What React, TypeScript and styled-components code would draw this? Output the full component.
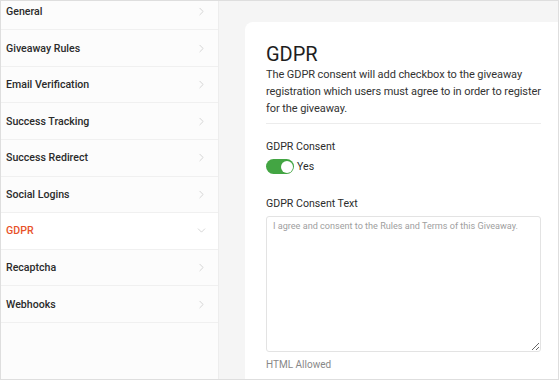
import styled, { createGlobalStyle } from "styled-components";
import { ChevronRight, ChevronDown } from "lucide-react";

const GlobalStyle = createGlobalStyle`
  * { box-sizing: border-box; }
  body {
    margin: 0;
    font-family: Roboto, "Noto Sans", sans-serif;
    color: #2c2c2c;
  }
`;

const Frame = styled.div`
  width: 559px;
  height: 380px;
  border: 1px solid #dedede;
  display: grid;
  grid-template-columns: 218px 1fr;
  overflow: hidden;
  background: #f5f5f5;
`;

const Sidebar = styled.nav`
  background: #fcfcfc;
  border-right: 1px solid #ededed;
  overflow: hidden;
`;

const MenuList = styled.ul`
  list-style: none;
  margin: -7.4px 0 0;
  padding: 0;
`;

const MenuItem = styled.li<{ $active?: boolean }>`
  height: 36.6px;
  display: flex;
  align-items: center;
  justify-content: space-between;
  padding: 0 10px 0 5px;
  border-bottom: 1px solid #f0f0f0;
  background: ${(p) => (p.$active ? "#ffffff" : "transparent")};
  color: ${(p) => (p.$active ? "#e8522a" : "#2b2b2b")};
  font-size: 10.6px;
  font-weight: 500;
  svg {
    color: #c4c4c4;
  }
`;

const Main = styled.main`
  padding: 21px 0 0 26px;
  display: flex;
`;

const Card = styled.section`
  flex: 1;
  background: #ffffff;
  border-top-left-radius: 8px;
  padding: 20px 17px 0 21px;
`;

const Title = styled.h1`
  margin: 0;
  font-size: 20px;
  font-weight: 400;
  line-height: 24px;
  color: #1e1e1e;
`;

const Description = styled.p`
  margin: 0 -4px 6px 0;
  font-size: 11px;
  line-height: 17px;
  letter-spacing: -0.08px;
  color: #333;
`;

const Divider = styled.hr`
  margin: 0;
  border: 0;
  border-top: 1px solid #ececec;
`;

const Field = styled.div<{ $gap?: number }>`
  margin-top: ${(p) => p.$gap ?? 16}px;
  display: flex;
  flex-direction: column;
  align-items: flex-start;
`;

const Label = styled.label`
  font-size: 10.6px;
  line-height: 14px;
  color: #2c2c2c;
  margin-bottom: 5px;
`;

const SwitchRow = styled.div`
  display: flex;
  align-items: center;
  gap: 3px;
  font-size: 10.6px;
  line-height: 15px;
  color: #2c2c2c;
`;

const Switch = styled.span<{ $on?: boolean }>`
  width: 28px;
  height: 15px;
  border-radius: 8px;
  background: ${(p) => (p.$on ? "#43a543" : "#ccc")};
  display: flex;
  align-items: center;
  justify-content: ${(p) => (p.$on ? "flex-end" : "flex-start")};
  padding: 1.5px;
  &::after {
    content: "";
    width: 12px;
    height: 12px;
    border-radius: 50%;
    background: #fff;
  }
`;

const TextArea = styled.textarea`
  width: 100%;
  height: 136px;
  border: 1px solid #e3e3e3;
  border-radius: 3px;
  padding: 4px 6px;
  font-family: inherit;
  font-size: 9.1px;
  color: #333;
  resize: vertical;
  &::placeholder {
    color: #a0a0a0;
  }
`;

const Hint = styled.div`
  margin-top: 7px;
  font-size: 10px;
  line-height: 12px;
  color: #888;
`;

const sections = [
  "General",
  "Giveaway Rules",
  "Email Verification",
  "Success Tracking",
  "Success Redirect",
  "Social Logins",
  "GDPR",
  "Recaptcha",
  "Webhooks",
];

export default function App() {
  const active = "GDPR";
  return (
    <>
      <GlobalStyle />
      <Frame>
        <Sidebar>
          <MenuList>
            {sections.map((s) => (
              <MenuItem key={s} $active={s === active}>
                {s}
                {s === active ? (
                  <ChevronDown size={13} strokeWidth={1.3} />
                ) : (
                  <ChevronRight size={13} strokeWidth={1.3} />
                )}
              </MenuItem>
            ))}
          </MenuList>
        </Sidebar>
        <Main>
          <Card>
            <Title>GDPR</Title>
            <Description>
              The GDPR consent will add checkbox to the giveaway registration
              which users must agree to in order to register for the giveaway.
            </Description>
            <Divider />
            <Field>
              <Label>GDPR Consent</Label>
              <SwitchRow>
                <Switch $on />
                Yes
              </SwitchRow>
            </Field>
            <Field $gap={23}>
              <Label>GDPR Consent Text</Label>
              <TextArea placeholder="I agree and consent to the Rules and Terms of this Giveaway." />
              <Hint>HTML Allowed</Hint>
            </Field>
          </Card>
        </Main>
      </Frame>
    </>
  );
}
